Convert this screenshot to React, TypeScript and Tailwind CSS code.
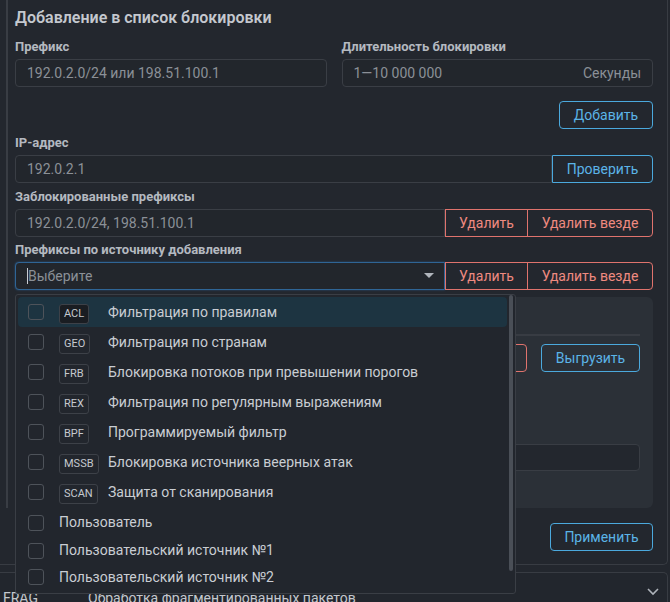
import React from 'react'

const inputBase =
  'h-[28px] border border-[#3a3e45] bg-[#22262c] px-[11px] flex items-center text-[14px] text-[#8b9097]'

const blueBtn =
  'h-[28px] border border-[#4ba9dd] text-[#5bb4e7] text-[14px] flex items-center justify-center bg-transparent'

const redBtn =
  'h-[28px] border border-[#e0736d] text-[#ef8a80] text-[14px] flex items-center justify-center bg-transparent'

function Label({ children }: { children: React.ReactNode }) {
  return <div className="h-[16px] leading-[16px] text-[13px] font-bold text-[#b4b9c0] mb-[4px]">{children}</div>
}

interface Source {
  badge?: string
  name:   string
  h:      string
}

const sources: Source[] = [
  { badge: 'ACL',  name: 'Фильтрация по правилам', h: 'h-[30px]' },
  { badge: 'GEO',  name: 'Фильтрация по странам', h: 'h-[30px]' },
  { badge: 'FRB',  name: 'Блокировка потоков при превышении порогов', h: 'h-[30px]' },
  { badge: 'REX',  name: 'Фильтрация по регулярным выражениям', h: 'h-[30px]' },
  { badge: 'BPF',  name: 'Программируемый фильтр', h: 'h-[30px]' },
  { badge: 'MSSB', name: 'Блокировка источника веерных атак', h: 'h-[30px]' },
  { badge: 'SCAN', name: 'Защита от сканирования', h: 'h-[30px]' },
  { name: 'Пользователь', h: 'h-[31px]' },
  { name: 'Пользовательский источник №1', h: 'h-[25px]' },
  { name: 'Пользовательский источник №2', h: 'h-[28px]' },
]

function Dropdown() {
  return (
    <div className="absolute left-[15px] top-[294px] w-[501px] h-[300px] border border-[#3a3e45] bg-[#22262d] rounded-[3px] overflow-hidden">
      <div className="pl-[2px] pr-[8px] pt-[2px]">
        {sources.map((s, i) => (
          <div
            key={i}
            className={`flex items-center pl-[10px] rounded-[4px] ${s.h} ${i === 0 ? 'bg-[#1d3441]' : ''}`}
          >
            <span className="w-[16px] h-[16px] shrink-0 rounded-[3px] border border-[#4e535a]" />
            {s.badge ? (
              <>
                <span className="ml-[15px] w-[49px] shrink-0">
                  <span
                    className={`inline-flex items-center h-[20px] px-[4px] rounded-[3px] border border-[#3d4148] text-[11px] text-[#c5c9cf] ${i === 0 ? 'bg-[#1a1d22]' : ''}`}
                  >
                    {s.badge}
                  </span>
                </span>
                <span className="text-[14px] text-[#c9cdd3] whitespace-nowrap">{s.name}</span>
              </>
            ) : (
              <span className="ml-[15px] text-[14px] text-[#c9cdd3] whitespace-nowrap">{s.name}</span>
            )}
          </div>
        ))}
      </div>
      {/* scrollbar */}
      <div className="absolute right-[2px] top-0 w-[4px] h-[276px] rounded-full bg-[#4a4f57]" />
    </div>
  )
}

export default function App() {
  return (
    <div className="relative w-[670px] h-[602px] overflow-hidden bg-[#23272e] font-['Roboto','Liberation_Sans',sans-serif]">
      {/* main card */}
      <div className="-ml-[4px] w-[672px] h-[565px] border-r border-b border-[#383c43] rounded-br-[5px] pr-[14px]">
        <div className="ml-[10px] border-l-2 border-[#393d44] pl-[7px] pt-[6px] pb-0">
          <div className="h-[24px] leading-[24px] text-[16px] font-semibold text-[#c4c8ce]">
            Добавление в список блокировки
          </div>

          <div className="grid grid-cols-2 gap-x-[15px] mt-[9px]">
            <div>
              <Label>Префикс</Label>
              <div className={`${inputBase} rounded-[4px]`}>192.0.2.0/24 или 198.51.100.1</div>
            </div>
            <div>
              <Label>Длительность блокировки</Label>
              <div className={`${inputBase} rounded-[4px] justify-between`}>
                <span>1—10 000 000</span>
                <span>Секунды</span>
              </div>
            </div>
          </div>

          <div className="flex justify-end mt-[14px]">
            <button className={`${blueBtn} w-[94px] rounded-[4px]`}>Добавить</button>
          </div>

          <div className="mt-[6px]">
            <Label>IP-адрес</Label>
            <div className="flex">
              <div className={`${inputBase} flex-1 rounded-l-[4px]`}>192.0.2.1</div>
              <button className={`${blueBtn} w-[101px] rounded-r-[4px]`}>Проверить</button>
            </div>
          </div>

          <div className="mt-[6px]">
            <Label>Заблокированные префиксы</Label>
            <div className="flex">
              <div className={`${inputBase} flex-1 rounded-l-[4px]`}>192.0.2.0/24, 198.51.100.1</div>
              <button className={`${redBtn} w-[83px]`}>Удалить</button>
              <button className={`${redBtn} w-[126px] -ml-px rounded-r-[4px]`}>Удалить везде</button>
            </div>
          </div>

          <div className="mt-[5px]">
            <Label>Префиксы по источнику добавления</Label>
            <div className="flex">
              <div className="h-[28px] flex-1 flex items-center rounded-l-[4px] border border-[#2f6596] shadow-[0_0_2px_#2a5a88] bg-[#22262c] pl-[11px] pr-[10px] text-[14px] text-[#8b9097]">
                <span className="w-px h-[16px] bg-[#c8ccd2]" />
                <span className="flex-1">Выберите</span>
                <svg width="10" height="6" viewBox="0 0 10 6">
                  <polygon points="0,0 10,0 5,5" fill="#b0b5bc" />
                </svg>
              </div>
              <button className={`${redBtn} w-[83px]`}>Удалить</button>
              <button className={`${redBtn} w-[126px] -ml-px rounded-r-[4px]`}>Удалить везде</button>
            </div>
          </div>

          {/* panel behind the dropdown */}
          <div className="mt-[7px] rounded-[6px] bg-[#2b3037] px-[13px] pt-[37px] pb-[37px]">
            <div className="border-t-2 border-[#383c43]" />
            <div className="flex justify-end gap-[14px] mt-[8px]">
              <button className={`${redBtn} w-[100px] h-[27px] rounded-[4px]`}>Удалить</button>
              <button className={`${blueBtn} w-[99px] h-[27px] rounded-[4px]`}>Выгрузить</button>
            </div>
            <div className="mt-[72px] h-[27px] rounded-[4px] border border-[#393d44] bg-[#23272e]" />
          </div>
        </div>

        <div className="flex justify-end mt-[15px]">
          <button className={`${blueBtn} w-[103px] h-[27px] rounded-[4px]`}>Применить</button>
        </div>
      </div>

      {/* collapsed card */}
      <div className="mt-[7px] -ml-[4px] w-[672px] h-[40px] border-t border-r border-[#383c43] rounded-tr-[5px] bg-[#22262d] flex items-start pt-[15px] pl-[7px] pr-[8px]">
        <span className="w-[85px] text-[14px] text-[#c4c8ce]">FRAG</span>
        <span className="flex-1 text-[14px] text-[#c4c8ce]">Обработка фрагментированных пакетов</span>
        <svg width="12" height="8" viewBox="0 0 12 8">
          <polyline points="1,1 6,6 11,1" fill="none" stroke="#aeb3ba" strokeWidth="1.6" />
        </svg>
      </div>

      <Dropdown />
    </div>
  )
}
